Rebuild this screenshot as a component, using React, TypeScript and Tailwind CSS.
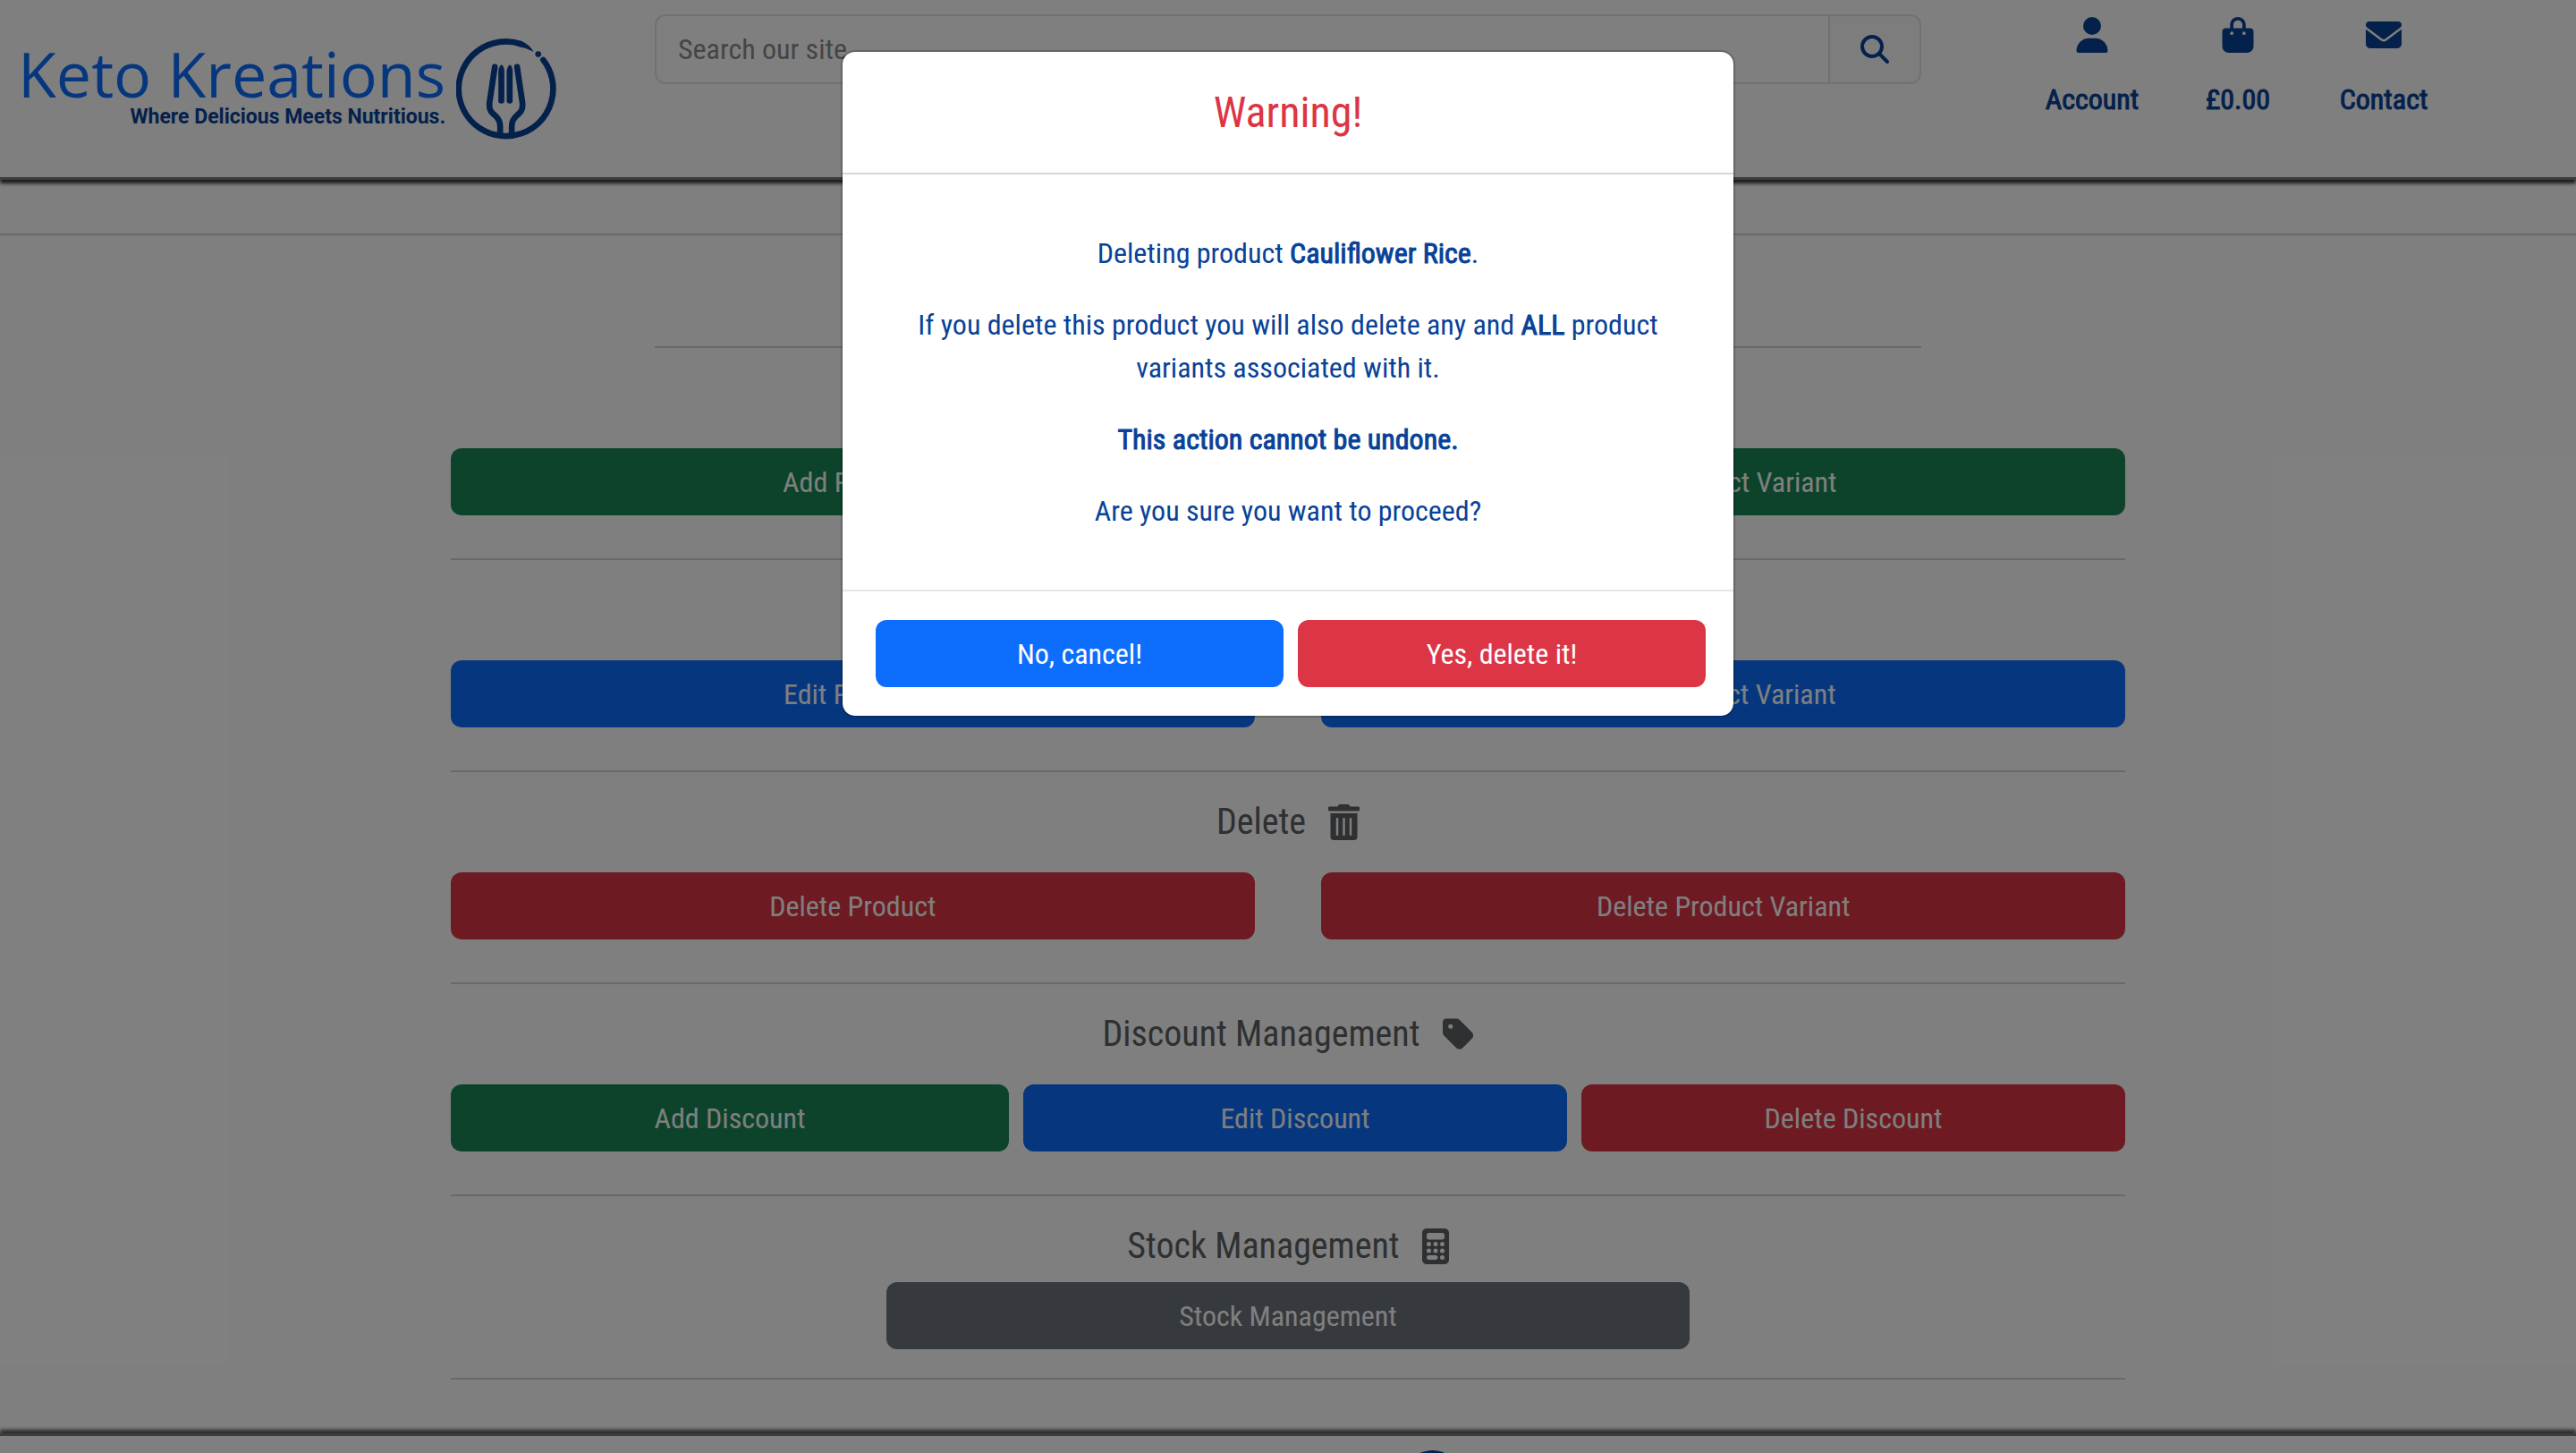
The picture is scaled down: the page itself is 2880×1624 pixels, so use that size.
import type { ReactNode } from "react";
import {
  FaBagShopping,
  FaCalculator,
  FaEnvelope,
  FaMagnifyingGlass,
  FaTag,
  FaUser,
} from "react-icons/fa6";
import { FaTrashAlt } from "react-icons/fa";

type Tone = "success" | "primary" | "danger" | "secondary";

const tones: Record<Tone, string> = {
  success: "bg-[#198754]",
  primary: "bg-[#0d6efd]",
  danger: "bg-[#dc3545]",
  secondary: "bg-[#6c757d]",
};

function Button({ tone, className = "", children }: { tone: Tone; className?: string; children: ReactNode }) {
  return (
    <button
      type="button"
      className={`h-[75px] rounded-xl text-center text-[32px] leading-[48px] text-white ${tones[tone]} ${className}`}
    >
      {children}
    </button>
  );
}

function Strong({ children }: { children: ReactNode }) {
  return <strong className="font-normal [-webkit-text-stroke:1px_currentColor]">{children}</strong>;
}

function Rule({ className = "" }: { className?: string }) {
  return <hr className={`border-0 border-t-2 border-[#d3d3d3] ${className}`} />;
}

function ForkMark({ className = "" }: { className?: string }) {
  return (
    <svg viewBox="30 68 340 338" className={className} fill="none" stroke="currentColor" strokeWidth="20" strokeLinecap="round" aria-hidden="true">
      <path d="M323 139A159 159 0 1 1 246 85" />
      <path d="M248 75Q276 86 291 112Q268 99 243 95Z" fill="currentColor" stroke="none" />
      <circle cx="306" cy="120" r="10" fill="currentColor" stroke="none" />
      <path d="M160 163L142 284V296Q142 312 160 325Q178 340 178 362V388" />
      <path d="M235 163L253 284V296Q253 312 235 325Q217 340 217 362V388" />
      <path d="M183 155Q192 160 192 180V276A10 10 0 0 1 172 276V180Q173 160 183 155Z" fill="currentColor" stroke="none" />
      <path d="M211 155Q220 160 220 180V276A10 10 0 0 1 200 276V180Q201 160 211 155Z" fill="currentColor" stroke="none" />
    </svg>
  );
}

function Header() {
  const links = [
    { label: "Account", icon: <FaUser className="size-10" /> },
    { label: "£0.00", icon: <FaBagShopping className="size-10" /> },
    { label: "Contact", icon: <FaEnvelope className="size-10" /> },
  ];
  return (
    <header className="grid grid-cols-4 border-b-[3px] border-[#7a7a7a] pb-[42px] shadow-[0_4px_4px_#333]">
      <a href="#home" className="flex items-start gap-3 pt-[43px] pl-5">
        <span className="flex flex-col items-end whitespace-nowrap">
          <span className="font-['Open_Sans',sans-serif] text-[70px] leading-[78px] text-[#0d6efd]">Keto Kreations</span>
          <span className="font-['Roboto',sans-serif] text-[23px] leading-[20px] font-bold text-[#084298]">
            Where Delicious Meets Nutritious.
          </span>
        </span>
        <ForkMark className="size-[113px] text-[#084298]" />
      </a>
      <form className="col-span-2 flex px-3 pt-4">
        <input
          type="search"
          aria-label="Search our site"
          placeholder="Search our site..."
          className="h-[78px] min-w-0 flex-1 rounded-l-xl border-2 border-[#e2e2e2] px-6 text-[32px] placeholder:text-[#8a8a8a]"
        />
        <button
          type="button"
          aria-label="Search"
          className="flex h-[78px] w-[102px] items-center justify-center rounded-r-xl border-2 border-l-0 border-[#e2e2e2] bg-[#fafafa] text-[#084298]"
        >
          <FaMagnifyingGlass className="size-8" />
        </button>
      </form>
      <nav className="flex justify-center pt-[19px] pr-9">
        {links.map(({ label, icon }) => (
          <a key={label} href="#nav" className="flex w-[163px] flex-col items-center gap-7 text-[#084298]">
            {icon}
            <span className="text-[32px] leading-[48px]">
              <Strong>{label}</Strong>
            </span>
          </a>
        ))}
      </nav>
    </header>
  );
}

function SectionTitle({ title, icon }: { title?: string; icon?: ReactNode }) {
  if (!title) return <div className="h-12" />;
  return (
    <h2 className="flex h-12 items-center justify-center gap-[25px] text-[40px] leading-[50px] text-[#5c6062]">
      {title}
      {icon}
    </h2>
  );
}

function PairSection({ title, icon, tone, verb }: { title?: string; icon?: ReactNode; tone: Tone; verb: string }) {
  return (
    <section className="pt-8 pb-12">
      <SectionTitle title={title} icon={icon} />
      <div className="mt-8 flex justify-between">
        <Button tone={tone} className="w-[48%]">{verb} Product</Button>
        <Button tone={tone} className="w-[48%]">{verb} Product Variant</Button>
      </div>
    </section>
  );
}

function DeleteModal() {
  return (
    <div className="absolute inset-0 bg-black/50">
      <div
        role="dialog"
        aria-modal="true"
        aria-labelledby="modal-title"
        className="mx-auto mt-14 w-[1000px] rounded-2xl border-2 border-black/20 bg-white bg-clip-padding text-center text-[32px] leading-[48px] text-[#084298]"
      >
        <h1 id="modal-title" className="border-b-2 border-[#d6d6d6] py-8 text-[48px] leading-[71px] text-[#dc3545]">
          Warning!
        </h1>
        <div className="flex flex-col gap-8 px-12 py-16">
          <p>
            Deleting product <Strong>Cauliflower Rice</Strong>.
          </p>
          <p>
            If you delete this product you will also delete any and <Strong>ALL</Strong> product variants associated
            with it.
          </p>
          <p>
            <Strong>This action cannot be undone.</Strong>
          </p>
          <p>Are you sure you want to proceed?</p>
        </div>
        <div className="flex gap-4 border-t-2 border-[#e6e6e6] pt-8 pr-[31px] pb-8 pl-[37px]">
          <Button tone="primary" className="flex-1">No, cancel!</Button>
          <Button tone="danger" className="flex-1">Yes, delete it!</Button>
        </div>
      </div>
    </div>
  );
}

export default function App() {
  return (
    <div className="relative h-screen overflow-hidden bg-white font-['Roboto_Condensed',Roboto,sans-serif]">
      <Header />
      <Rule className="mt-[60px]" />
      <Rule className="mx-auto mt-[124px] w-[1416px]" />
      <main className="mx-auto w-[65%]">
        <PairSection tone="success" verb="Add" />
        <Rule />
        <PairSection tone="primary" verb="Edit" />
        <Rule />
        <PairSection title="Delete" icon={<FaTrashAlt className="h-10 w-[35px]" />} tone="danger" verb="Delete" />
        <Rule />
        <section className="pt-8 pb-12">
          <SectionTitle title="Discount Management" icon={<FaTag className="h-10 w-[35px]" />} />
          <div className="mt-8 grid grid-cols-3">
            <Button tone="success">Add Discount</Button>
            <Button tone="primary" className="ml-4">Edit Discount</Button>
            <Button tone="danger" className="ml-4">Delete Discount</Button>
          </div>
        </section>
        <Rule />
        <section className="pt-8 pb-8">
          <SectionTitle title="Stock Management" icon={<FaCalculator className="h-10 w-[30px]" />} />
          <div className="mt-4 flex justify-center">
            <Button tone="secondary" className="w-[48%]">Stock Management</Button>
          </div>
        </section>
        <Rule />
      </main>
      <footer className="mt-[60px] flex justify-center border-t-[3px] border-[#7a7a7a] pt-4 pl-[324px] text-[#084298] shadow-[0_-4px_4px_#555]">
        <ForkMark className="size-[72px]" />
      </footer>
      <DeleteModal />
    </div>
  );
}
